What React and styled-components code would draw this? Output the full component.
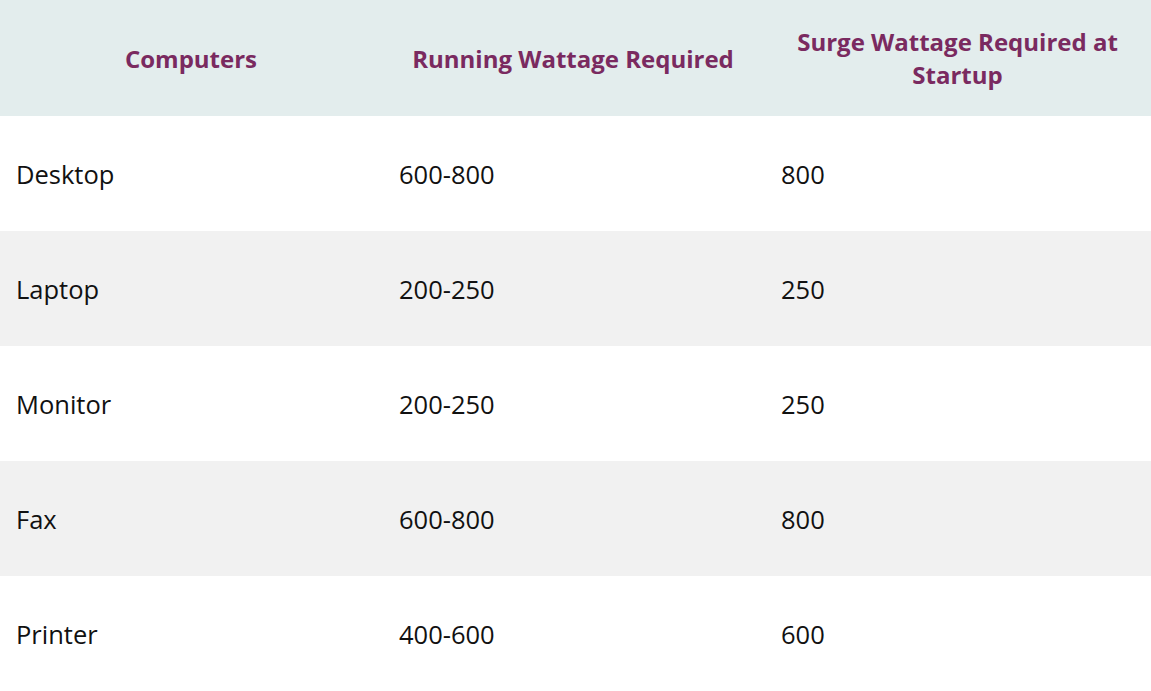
import React from 'react';
import styled, { createGlobalStyle } from 'styled-components';

const GlobalStyle = createGlobalStyle`
	html, body {
		margin: 0;
		padding: 0;
		background: #fff;
	}
	body {
		font-family: "Open Sans", "Liberation Sans", sans-serif;
	}
`;

const Table = styled("div")`
	width: 1151px;
	display: grid;
	grid-template-columns: 382px 382px 1fr;
`;
const HeaderCell = styled("div")`
	height: 116px;
	background: #e3eded;
	color: #7a2a60;
	font-weight: 700;
	font-size: 24px;
	line-height: 33px;
	display: flex;
	align-items: center;
	justify-content: center;
	text-align: center;
	padding: 0 16px;
	box-sizing: border-box;
`;
const Cell = styled("div")`
	height: 115px;
	background: ${p => (p.$shaded ? "#f1f1f1" : "#fff")};
	color: #111;
	font-size: 25.5px;
	display: flex;
	align-items: center;
	padding-left: ${p => (p.$first ? "16px" : "17px")};
	box-sizing: border-box;
`;

const rows = [
	["Desktop", "600-800", "800"],
	["Laptop", "200-250", "250"],
	["Monitor", "200-250", "250"],
	["Fax", "600-800", "800"],
	["Printer", "400-600", "600"],
];

export default function App() {
	return (
		<>
			<GlobalStyle />
			<Table>
				<HeaderCell>Computers</HeaderCell>
				<HeaderCell>Running Wattage Required</HeaderCell>
				<HeaderCell>Surge Wattage Required at Startup</HeaderCell>
				{rows.map((row, i) =>
					row.map((value, j) => (
						<Cell key={`${i}-${j}`} $shaded={i % 2 === 1} $first={j === 0}>{value}</Cell>
					))
				)}
			</Table>
		</>
	);
}
